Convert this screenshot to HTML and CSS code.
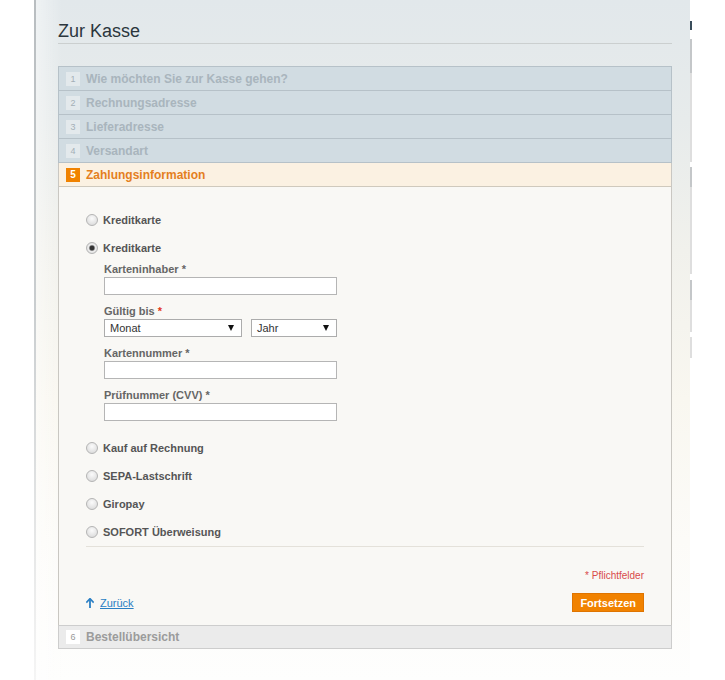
FILE: index.html
```html
<!DOCTYPE html>
<html lang="de">
<head>
<meta charset="utf-8">
<title>Zur Kasse</title>
<link rel="stylesheet" href="styles.css">
</head>
<body>
<div class="page">
  <div class="main">
    <h1 class="title">Zur Kasse</h1>
    <ol class="steps">
      <li class="step"><div class="step-head"><span class="num">1</span><span class="step-name">Wie möchten Sie zur Kasse gehen?</span></div></li>
      <li class="step"><div class="step-head"><span class="num">2</span><span class="step-name">Rechnungsadresse</span></div></li>
      <li class="step"><div class="step-head"><span class="num">3</span><span class="step-name">Lieferadresse</span></div></li>
      <li class="step"><div class="step-head"><span class="num">4</span><span class="step-name">Versandart</span></div></li>
      <li class="step active">
        <div class="step-head"><span class="num">5</span><span class="step-name">Zahlungsinformation</span></div>
        <div class="step-body">
          <ul class="methods">
            <li class="method"><span class="radio"></span><span class="method-name">Kreditkarte</span></li>
            <li class="method"><span class="radio checked"></span><span class="method-name">Kreditkarte</span></li>
          </ul>
          <div class="cc-form">
            <div class="field">
              <label>Karteninhaber *</label>
              <input class="text" type="text">
            </div>
            <div class="field">
              <label>Gültig bis <span class="req">*</span></label>
              <div class="selects">
                <div class="select month"><span>Monat</span><span class="arrow"></span></div>
                <div class="select year"><span>Jahr</span><span class="arrow"></span></div>
              </div>
            </div>
            <div class="field">
              <label>Kartennummer *</label>
              <input class="text" type="text">
            </div>
            <div class="field">
              <label>Prüfnummer (CVV) *</label>
              <input class="text" type="text">
            </div>
          </div>
          <ul class="methods rest">
            <li class="method"><span class="radio"></span><span class="method-name">Kauf auf Rechnung</span></li>
            <li class="method"><span class="radio"></span><span class="method-name">SEPA-Lastschrift</span></li>
            <li class="method"><span class="radio"></span><span class="method-name">Giropay</span></li>
            <li class="method"><span class="radio"></span><span class="method-name">SOFORT Überweisung</span></li>
          </ul>
          <div class="required">* Pflichtfelder</div>
          <div class="actions">
            <a class="back" href="#"><svg class="up" width="8" height="10" viewBox="0 0 8 10"><path d="M4 10V2" stroke="#2a7fc4" stroke-width="1.8" fill="none"/><path d="M0.3 4.6L4 0.6L7.7 4.6" stroke="#2a7fc4" stroke-width="1.6" fill="none"/></svg><span class="back-text">Zurück</span></a>
            <button class="btn" type="button">Fortsetzen</button>
          </div>
        </div>
      </li>
      <li class="step last"><div class="step-head"><span class="num">6</span><span class="step-name">Bestellübersicht</span></div></li>
    </ol>
  </div>
  <div class="sidebar">
    <div class="sb-mark"></div>
    <div class="sb-box b1"><div class="sb-head"></div><div class="sb-body"></div></div>
    <div class="sb-box b2"><div class="sb-head"></div><div class="sb-body"></div></div>
    <div class="sb-box b3"><div class="sb-head"></div><div class="sb-body"></div></div>
    <div class="sb-box b4"><div class="sb-body"></div></div>
  </div>
</div>
</body>
</html>
```
FILE: styles.css
```css
* { box-sizing: border-box; }
html, body { margin: 0; height: 680px; }
body {
  width: 725px;
  overflow: hidden;
  background: #fff;
  font-family: "Liberation Sans", Arial, sans-serif;
}
.page { display: flex; height: 680px; }

.main {
  width: 656px;
  flex: none;
  margin-left: 34px;
  padding: 20px 18px 0 22px;
  border-left: 2px solid #bcc1c4;
  border-image: linear-gradient(#b8bdc0, #c9cdcf 45%, #e6e7e7 80%, #f5f5f5) 1;
  background:
    linear-gradient(90deg, rgba(255,255,255,0.45), rgba(255,255,255,0) 26px),
    linear-gradient(180deg, #e2e8eb 0, #e7ebeb 120px, #f1f1ec 250px, #f9f7f0 400px, #fcfbf8 540px, #fefefd 680px);
}

.title {
  margin: 0;
  font-size: 18px;
  font-weight: normal;
  line-height: 22px;
  color: #2b363d;
  padding-bottom: 1px;
  border-bottom: 1px solid #cbcfcf;
}

.steps {
  list-style: none;
  margin: 22px 0 0;
  padding: 0;
  border-top: 1px solid #b6c1c8;
}
.step {
  border-left: 1px solid #b6c1c8;
  border-right: 1px solid #b6c1c8;
}
.step-head {
  height: 24px;
  display: flex;
  align-items: center;
  padding-left: 7px;
  background: #d1dce2;
  border-bottom: 1px solid #b6c1c8;
}
.num {
  width: 14px;
  height: 14px;
  flex: none;
  display: flex;
  align-items: center;
  justify-content: center;
  background: #e3e9ec;
  color: #a3afb7;
  font-size: 9px;
  margin-right: 6px;
}
.step-name {
  font-size: 12px;
  font-weight: bold;
  color: #a9b5bd;
}

.step.active {
  border-left-color: #c9c7c2;
  border-right-color: #c9c7c2;
}
.step.active .step-head {
  background: #fbf1e2;
  border-bottom-color: #cfc9bd;
}
.step.active .num {
  background: #f08200;
  color: #fff;
  font-weight: bold;
  font-size: 10px;
}
.step.active .step-name { color: #e47f1e; }

.step-body {
  background: #f9f8f5;
  padding: 19px 27px 13px;
}

.methods { list-style: none; margin: 0; padding: 0; }
.method {
  height: 28px;
  display: flex;
  align-items: center;
}
.radio {
  width: 12px;
  height: 12px;
  flex: none;
  border-radius: 50%;
  border: 1px solid #b4b4b4;
  background: radial-gradient(circle at 50% 35%, #fbfbfb 0, #eaeaea 45%, #d6d6d6 100%);
  margin-right: 5px;
}
.radio.checked {
  background: radial-gradient(circle, #333 0, #333 2px, #9a9a9a 2.7px, #efefef 3.6px, #e2e2e2 70%, #d2d2d2 100%);
}
.method-name {
  font-size: 11px;
  font-weight: bold;
  color: #555;
}

.cc-form { padding-left: 18px; margin-bottom: 13px; }
.field + .field { margin-top: 9px; }
.field label {
  display: block;
  font-size: 11px;
  line-height: 14px;
  font-weight: bold;
  color: #666;
  margin-bottom: 1px;
}
.req { color: #e2391b; }
.text {
  display: block;
  width: 233px;
  height: 18px;
  margin: 0;
  padding: 0;
  border: 1px solid #b5b5b5;
  background: #fff;
}
.selects { display: flex; gap: 9px; }
.select {
  height: 18px;
  display: flex;
  align-items: center;
  justify-content: space-between;
  padding: 0 7px 0 5px;
  border: 1px solid #acacac;
  background: #fff;
  font-size: 11px;
  color: #333;
}
.select.month { width: 138px; }
.select.year { width: 86px; }
.arrow {
  width: 0;
  height: 0;
  border-left: 3px solid transparent;
  border-right: 3px solid transparent;
  border-top: 6px solid #111;
}

.methods.rest { border-bottom: 1px solid #e4e1da; }

.required {
  text-align: right;
  font-size: 10px;
  line-height: 12px;
  color: #d84a4a;
  margin-top: 23px;
}
.actions {
  display: flex;
  justify-content: space-between;
  align-items: center;
  margin-top: 11px;
}
.back {
  display: flex;
  align-items: center;
  gap: 6px;
  font-size: 11px;
  color: #2a7fc4;
  text-decoration: none;
}
.back-text { text-decoration: underline; }
.up { display: block; }
.btn {
  height: 19px;
  padding: 0 7px;
  margin: 0;
  background: #f18200;
  border: 1px solid #df7400;
  color: #fff;
  font-family: "Liberation Sans", Arial, sans-serif;
  font-weight: bold;
  font-size: 11px;
}

.step.last {
  border-left-color: #cdcdcd;
  border-right-color: #cdcdcd;
}
.step.last .step-head {
  background: #ebebeb;
  border-top: 1px solid #cdcdcd;
  border-bottom: 1px solid #cdcdcd;
}
.step.last .num { background: #fff; color: #999; }
.step.last .step-name { color: #9b9b9b; }

.sidebar {
  width: 35px;
  flex: none;
  overflow: hidden;
  padding-top: 21px;
}
.sb-mark { width: 2px; height: 9px; background: #3a4d5b; }
.sb-box .sb-head { border-left: 2px solid #c4c7c9; }
.sb-box .sb-body { border-left: 2px solid #dedede; }
.b1 { margin-top: 9px; }
.b1 .sb-head { height: 34px; }
.b1 .sb-body { height: 89px; }
.b2 { margin-top: 5px; }
.b2 .sb-head { height: 20px; }
.b2 .sb-body { height: 87px; }
.b3 { margin-top: 6px; }
.b3 .sb-head { height: 20px; }
.b3 .sb-body { height: 32px; }
.b4 { margin-top: 5px; }
.b4 .sb-body { height: 21px; }
```
